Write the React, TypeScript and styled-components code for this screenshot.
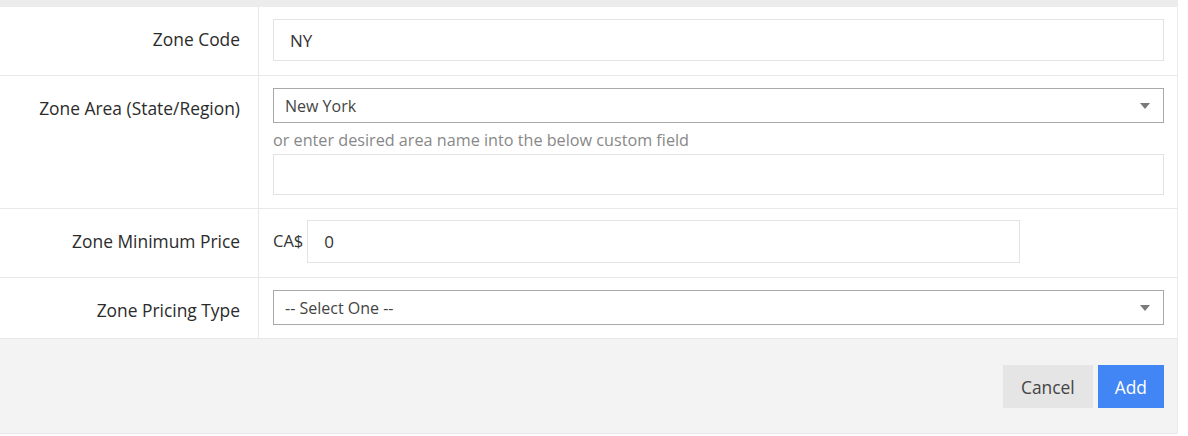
import React from "react";
import styled, { createGlobalStyle } from "styled-components";

const GlobalStyle = createGlobalStyle`
  html, body {
    margin: 0;
    padding: 0;
    background: #ffffff;
  }
  body {
    font-family: "Open Sans", "Liberation Sans", sans-serif;
    color: #333333;
  }
`;

const Page = styled.div`
  width: 1188px;
  height: 436px;
  display: flex;
  flex-direction: column;
  overflow: hidden;
`;

const TopStrip = styled.div`
  height: 7px;
  width: 1178px;
  background: #ececec;
  flex-shrink: 0;
`;

const Panel = styled.div`
  width: 1177px;
  border-right: 1px solid #ebebeb;
  display: flex;
  flex-direction: column;
`;

const Row = styled.div<{ $h?: number }>`
  display: grid;
  grid-template-columns: 259px 1fr;
  height: ${(p) => (p.$h ? `${p.$h}px` : "auto")};
  box-sizing: border-box;
  border-bottom: 1px solid #e8e8e8;
  background: #ffffff;
`;

const Label = styled.div`
  border-right: 1px solid #e8e8e8;
  text-align: right;
  padding: 20px 18px 0 0;
  font-size: 17.4px;
  line-height: 24px;
  color: #2b2b2b;
`;

const Field = styled.div<{ $top?: number }>`
  padding: ${(p) => p.$top ?? 12}px 13px 0 14px;
  display: flex;
  flex-direction: column;
`;

const TextInput = styled.div<{ $h?: number; $w?: number }>`
  height: ${(p) => p.$h ?? 42}px;
  width: ${(p) => (p.$w ? `${p.$w}px` : "auto")};
  box-sizing: border-box;
  border: 1px solid #e3e3e3;
  padding: 0 16px;
  display: flex;
  align-items: center;
  font-size: 17px;
  color: #333333;
`;

const Select = styled.div`
  height: 35px;
  box-sizing: border-box;
  border: 1px solid #a9a9a9;
  padding: 0 11px;
  display: flex;
  align-items: center;
  justify-content: space-between;
  font-size: 16px;
  color: #444444;
`;

const Arrow = styled.span`
  width: 0;
  height: 0;
  border-left: 5px solid transparent;
  border-right: 5px solid transparent;
  border-top: 6px solid #7a7a7a;
  margin-right: 2px;
`;

const Hint = styled.div`
  font-size: 16.2px;
  line-height: 22px;
  color: #888888;
  margin: 6px 0 3px;
`;

const PriceLine = styled.div`
  display: flex;
  align-items: flex-start;
  gap: 4px;
`;

const Currency = styled.span`
  font-size: 16.5px;
  line-height: 20px;
  padding-top: 11px;
  color: #333333;
`;

const Footer = styled.div`
  height: 95px;
  background: #f3f3f3;
  border-bottom: 1px solid #e6e6e6;
  display: flex;
  justify-content: flex-end;
  align-items: flex-start;
  gap: 5px;
  padding: 26px 13px 0 0;
  box-sizing: border-box;
`;

const Button = styled.button<{ $primary?: boolean }>`
  height: 43px;
  border: none;
  outline: none;
  font-family: inherit;
  font-size: 17.4px;
  padding: 0 ${(p) => (p.$primary ? 17 : 18)}px;
  background: ${(p) => (p.$primary ? "#4285f4" : "#e5e5e5")};
  color: ${(p) => (p.$primary ? "#ffffff" : "#444444")};
  cursor: pointer;
`;

export default function App() {
  return (
    <Page>
      <GlobalStyle />
      <TopStrip />
      <Panel>
        <Row $h={69}>
          <Label>Zone Code</Label>
          <Field>
            <TextInput>NY</TextInput>
          </Field>
        </Row>
        <Row $h={133}>
          <Label>Zone Area (State/Region)</Label>
          <Field>
            <Select>
              <span>New York</span>
              <Arrow />
            </Select>
            <Hint>or enter desired area name into the below custom field</Hint>
            <TextInput $h={41} />
          </Field>
        </Row>
        <Row $h={69}>
          <Label>Zone Minimum Price</Label>
          <Field $top={11}>
            <PriceLine>
              <Currency>CA$</Currency>
              <TextInput $h={43} $w={713}>0</TextInput>
            </PriceLine>
          </Field>
        </Row>
        <Row $h={61}>
          <Label>Zone Pricing Type</Label>
          <Field>
            <Select>
              <span>-- Select One --</span>
              <Arrow />
            </Select>
          </Field>
        </Row>
        <Footer>
          <Button>Cancel</Button>
          <Button $primary>Add</Button>
        </Footer>
      </Panel>
    </Page>
  );
}
